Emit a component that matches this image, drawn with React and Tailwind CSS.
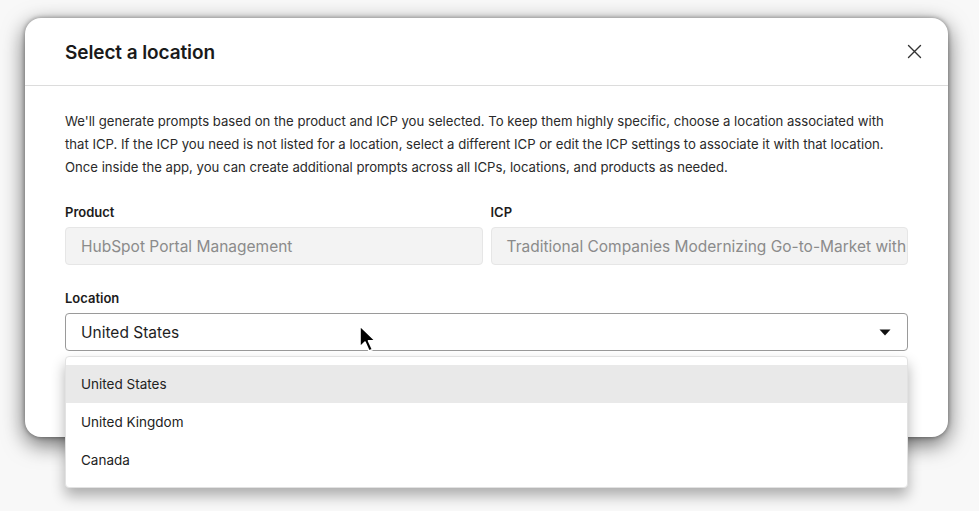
import React, { useState } from 'react';

const font = { fontFamily: 'Inter, "Noto Sans", sans-serif' };

const locations = ['United States', 'United Kingdom', 'Canada'];

const CloseIcon = () => (
  <svg width="15" height="15" viewBox="0 0 15 15" fill="none">
    <path d="M1.5 1.5L13.5 13.5M13.5 1.5L1.5 13.5" stroke="#333" strokeWidth="1.4" strokeLinecap="round" />
  </svg>
);

const Caret = () => (
  <svg width="12" height="7" viewBox="0 0 12 7">
    <path d="M0.5 0.5H11.5L6 6.5Z" fill="#111" />
  </svg>
);

const Pointer = () => (
  <svg width="22" height="30" viewBox="0 0 22 30">
    <path
      d="M2 2V23L7 18L11 27L14.5 25.5L10.5 16.8H17.5Z"
      fill="#000"
      stroke="#fff"
      strokeWidth="1.6"
      strokeLinejoin="round"
    />
  </svg>
);

const ReadOnlyField = ({ label, value }) => (
  <div className="flex-1 min-w-0 flex flex-col gap-[5px]">
    <label className="text-[13px] leading-5 font-semibold text-[#1c1c1c]">{label}</label>
    <div className="h-[38px] flex items-center pl-[15px] pr-0 rounded-[4px] bg-[#f3f3f3] border border-[#e6e6e6] overflow-hidden">
      <span className="text-[15.5px] text-[#8b8b8b] whitespace-nowrap pt-[2px]">{value}</span>
    </div>
  </div>
);

export default function App() {
  const [location, setLocation] = useState('United States');
  const [hovered, setHovered] = useState('United States');

  return (
    <div className="relative w-[979px] h-[511px] overflow-hidden bg-[#f8f8f8]" style={font}>
      {/* modal */}
      <div className="pt-[18px] pl-[25px]">
        <div className="w-[923px] h-[419px] bg-white rounded-[16px] shadow-[0_7px_22px_rgba(0,0,0,0.6),0_0_5px_rgba(0,0,0,0.4)] flex flex-col">
          <div className="h-[68px] flex items-center justify-between pl-10 pr-[22px] border-b border-[#dcdcdc]">
            <h2 className="text-[19px] font-semibold text-[#1a1a1a] tracking-[-0.1px] pt-[3px]">Select a location</h2>
            <button className="w-6 h-6 flex items-center justify-center">
              <CloseIcon />
            </button>
          </div>

          <div className="pl-10 pr-[40px] pt-6">
            <div className="text-[13.15px] leading-[23px] text-[#2a2a2a]">
              <p className="whitespace-nowrap">
                We'll generate prompts based on the product and ICP you selected. To keep them highly specific, choose a location associated with
              </p>
              <p className="whitespace-nowrap">
                that ICP. If the ICP you need is not listed for a location, select a different ICP or edit the ICP settings to associate it with that location.
              </p>
              <p className="whitespace-nowrap">
                Once inside the app, you can create additional prompts across all ICPs, locations, and products as needed.
              </p>
            </div>

            <div className="flex gap-2 mt-[23px]">
              <ReadOnlyField label="Product" value="HubSpot Portal Management" />
              <ReadOnlyField label="ICP" value="Traditional Companies Modernizing Go-to-Market with HubSpot" />
            </div>

            <div className="flex flex-col gap-[5px] mt-[23px]">
              <label className="text-[13px] leading-5 font-semibold text-[#1c1c1c]">Location</label>
              <div className="relative">
                <div className="h-[38px] flex items-center justify-between pl-[15px] pr-4 rounded-[4px] border border-[#9a9a9a] bg-white">
                  <span className="text-[15.5px] text-[#1e1e1e] pt-[2px]">{location}</span>
                  <Caret />
                </div>

                {/* open dropdown */}
                <div className="absolute left-0 right-0 top-[43px] z-10 bg-white rounded-[4px] border border-[#e2e2e2] py-2 shadow-[0_8px_14px_rgba(0,0,0,0.3)]">
                  {locations.map((loc) => (
                    <div
                      key={loc}
                      onMouseEnter={() => setHovered(loc)}
                      onClick={() => setLocation(loc)}
                      className={`h-[38px] flex items-center pl-[15px] text-[13.5px] text-[#222] cursor-pointer ${
                        hovered === loc ? 'bg-[#e9e9e9]' : 'bg-white'
                      }`}
                    >
                      {loc}
                    </div>
                  ))}
                </div>
              </div>
            </div>
          </div>
        </div>
      </div>

      {/* mouse pointer */}
      <div className="absolute left-[358px] top-[324px] z-20 pointer-events-none">
        <Pointer />
      </div>
    </div>
  );
}
